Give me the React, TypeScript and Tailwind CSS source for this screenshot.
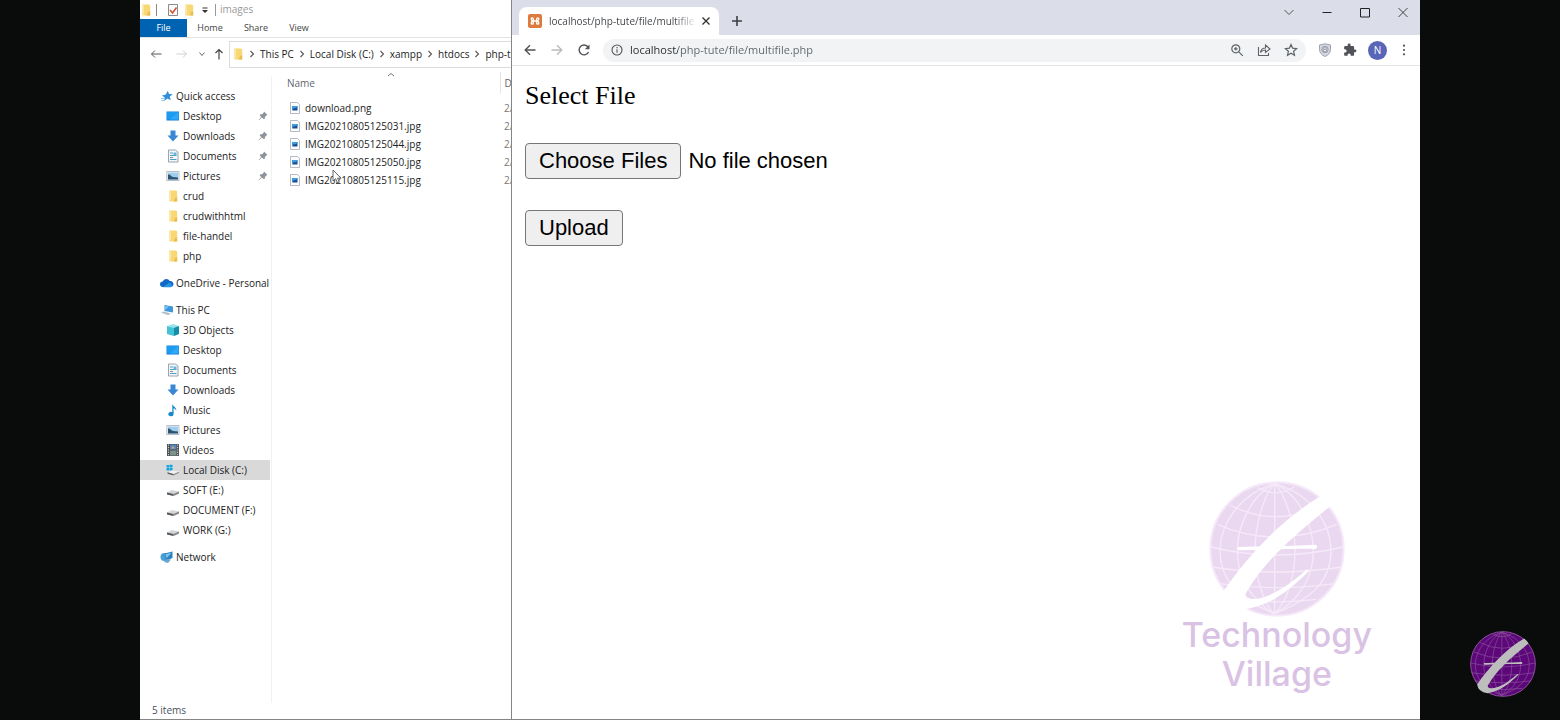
import React from "react";

type IconProps = { className?: string };

const Folder = ({ className = "" }: IconProps) => (
  <svg className={`h-3 w-3 shrink-0 ${className}`} viewBox="0 0 12 12" aria-hidden="true">
    <path d="M2 .5h7l1.200 1V11.500H3L2 10.500z" fill="#f8d775" />
    <path d="M2 .5h2v10.500L2 10z" fill="#fbe7a6" />
    <path d="M8.500 7.500h1.700v4H6.500z" fill="#e9bd51" />
  </svg>
);

const Star = () => (
  <svg className="h-3 w-3" viewBox="0 0 12 12" aria-hidden="true">
    <path d="M6.800.8 8 4l3.700.2-2.900 2.300.9 3.800-3.300-1.900L3.200 11l.5-3.500L1 5.500l3.800-.9z" fill="#2f8fdc" />
    <path d="M0 8.500h3M.5 10.500h2.500" stroke="#6db6ec" strokeWidth=".8" />
  </svg>
);

const Desktop = () => (
  <svg className="h-3 w-3.5" viewBox="0 0 14 12" aria-hidden="true">
    <path d="M.5 1.500h12.500v9H.5z" fill="#0d7fdb" />
    <path d="M1 2h11.500v7.500H1z" fill="#1d9bf0" />
    <path d="M12.500 2v7.500H4z" fill="#2fa8f8" />
  </svg>
);

const Download = () => (
  <svg className="h-3 w-3.5" viewBox="0 0 14 12" aria-hidden="true">
    <path d="M4.500.5h5v5h3L7 11.500 1.500 5.500h3z" fill="#3a87d4" />
  </svg>
);

const Doc = () => (
  <svg className="h-3.5 w-3.5" viewBox="0 0 14 14" aria-hidden="true">
    <path d="M2.500 1h7l2.500 2v10h-9.500z" fill="#f4f7f9" stroke="#8d9aa3" strokeWidth=".9" />
    <path d="M4 4h3M4 6.500h6.500M4 10.500h6.500" stroke="#4d9dc4" strokeWidth="1" />
    <path d="M4 8.500h3" stroke="#86939b" strokeWidth="1" />
    <path d="M7.500 3.500h3v3h-3z" fill="#68b4d6" />
  </svg>
);

const Picture = () => (
  <svg className="h-3 w-3.5" viewBox="0 0 14 12" aria-hidden="true">
    <path d="M.8 1.500h12.200v9H.8z" fill="#f5f7f9" stroke="#a6afb8" strokeWidth=".8" />
    <path d="M2 2.500h10v7H2z" fill="#9fcdec" />
    <path d="M2 4.500c2-.5 3 2 5 2.500l5 .5v2H2z" fill="#2d5372" />
  </svg>
);

const Cloud = () => (
  <svg className="h-3 w-3.5" viewBox="0 0 14 12" aria-hidden="true">
    <path d="M3 10a2.800 2.800 0 0 1-.3-5.600A4 4 0 0 1 9.800 4 3 3 0 0 1 11 10z" fill="#1168c4" />
    <path d="M3 10.200 9.500 5.500a2.800 2.800 0 0 1 1.500 4.700z" fill="#2397e6" />
  </svg>
);

const Computer = () => (
  <svg className="h-3 w-3.5" viewBox="0 0 14 12" aria-hidden="true">
    <path d="M4.500 1 13 2.500v6L4.500 7z" fill="#3c97dc" />
    <path d="M5.200 2 9 2.600 5.200 6z" fill="#7cc3ef" />
    <path d="M1 8.500 4 7.500l7 2-3 1.700z" fill="#b5c1ca" />
  </svg>
);

const Cube = () => (
  <svg className="h-3.5 w-3.5" viewBox="0 0 14 14" aria-hidden="true">
    <path d="m1 3 6-2 6 2-4.500 1.800z" fill="#99e2ec" />
    <path d="m1 3 7 1.800V13L1 11z" fill="#45c3d6" />
    <path d="M13 3 8 4.800V13l5-2z" fill="#128fa8" />
  </svg>
);

const Note = () => (
  <svg className="h-3.5 w-3.5" viewBox="0 0 14 14" aria-hidden="true">
    <path d="M6.300.8c.5 3 4.500 3.200 3.900 7.200-.5-2-1.600-2.500-2.600-2.700V11a2.600 2.200 0 1 1-1.300-1.900z" fill="#1788d0" />
  </svg>
);

const Film = () => (
  <svg className="h-3.5 w-3.5" viewBox="0 0 14 14" aria-hidden="true">
    <path d="M1 1h12v12H1z" fill="#4b4e55" />
    <path d="M4 1.500h6.500v5H4z" fill="#5b83bd" />
    <path d="M4 7.500h6.500v5H4z" fill="#7e9488" />
    <path d="M5 5.500 7 3l2 2.500z" fill="#c9ae61" />
    <path d="M2.400 1.500v11M11.700 1.500v11" stroke="#dfe2e6" strokeWidth="1" strokeDasharray="1.200 1.200" />
  </svg>
);

const Drive = () => (
  <svg className="h-3 w-3.5" viewBox="0 0 14 12" aria-hidden="true">
    <path d="m1 8.500 5-2.500 7 1.500v2L7.500 12 1 10.500z" fill="#d4d6d8" />
    <path d="M1 8.500 7.500 10v2L1 10.500z" fill="#56595c" />
    <path d="M7.500 10 13 7.500v2L7.500 12z" fill="#85888b" />
  </svg>
);

const SystemDrive = () => (
  <svg className="h-3 w-3.5" viewBox="0 0 14 12" aria-hidden="true">
    <path d="M.5 1h2.700v2.500H.5zM3.600.8h2.900v2.700H3.600zM.5 3.900h2.700v2.500H.5zM3.600 3.900h2.900v2.700H3.600z" fill="#12a5dd" />
    <path d="m2 8.500 4-2 7 1v1.500L7.500 11.500 2 10z" fill="#eef0f1" />
    <path d="M1.500 8.300 7.500 10v1.500l-6-1.700z" fill="#54585b" />
    <path d="M7.500 10 13 7.800V9l-5.500 2.500z" fill="#8b8e91" />
  </svg>
);

const NetworkIcon = () => (
  <svg className="h-3.5 w-3.5" viewBox="0 0 14 14" aria-hidden="true">
    <circle cx="4.500" cy="7" r="4" fill="#4aa0d4" />
    <path d="M4.500 3.500 12.500 1.500v6.500L6 10.500z" fill="#2c82c0" />
    <path d="m5.500 4.300 6-1.500-5 5.500z" fill="#7cc6ec" />
    <path d="m4 12 3-3 4 .5-3 3.500z" fill="#6aa7cf" />
  </svg>
);

const Pin = () => (
  <svg className="h-2.5 w-2.5" viewBox="0 0 10 10" aria-hidden="true">
    <path d="M6 .5 9.500 4l-1.200.5-1.500 1.700.1 1.500-1 .6-2-1.900L1 9.300.6 9l2.600-3-1.500-1.800.7-1 1.700.1L5.600 1.800z" fill="#8d9399" />
  </svg>
);

const ImageFile = () => (
  <svg className="h-3 w-2.5 shrink-0" viewBox="0 0 10 12" aria-hidden="true">
    <path d="M.5.500h7l2 2v9h-9z" fill="#fbfcfd" stroke="#a3abb3" strokeWidth=".8" />
    <path d="M2.300 4h5.200v4.500H2.300z" fill="#174f96" />
    <path d="M2.300 4h5.200v1.300L5.500 6 2.300 6.800z" fill="#3d9fe0" />
  </svg>
);

type Tone = { fill: string; line: string; mark: string };

const Globe = ({ tone, className }: { tone: Tone; className: string }) => (
  <svg className={className} viewBox="0 0 408 408" aria-hidden="true">
    <circle cx="204" cy="204" r="200" fill={tone.fill} stroke={tone.line} strokeWidth="6" />
    <g fill="none" stroke={tone.line} strokeWidth="4">
      <path d="M197 8C90 40 33 130 33 210S80 350 196 398" />
      <path d="M197 8C130 40 85 130 85 210S130 360 196 398" />
      <path d="M197 8C165 40 138 130 138 210S165 370 196 398" />
      <path d="M197 8V398" />
      <path d="M197 8C230 40 258 130 258 210S230 370 196 398" />
      <path d="M197 8C270 40 313 130 313 210S270 360 196 398" />
      <path d="M197 8C310 40 366 130 366 210S320 350 196 398" />
      <path d="M146 20Q200 52 256 18M63 72Q200 142 340 72M25 130Q200 206 384 130M6 198Q200 246 402 198M8 258Q200 288 400 258M30 308Q200 332 378 308M85 355Q200 370 322 355" />
    </g>
    <g fill={tone.mark}>
      <path d="M334 46C215 118 120 220 44 330Q50 376 108 385C185 372 240 330 299 271Q300 263 291 267C235 318 180 350 138 354C112 354 106 345 112 334C165 245 240 175 362 77Q352 58 334 46Z" />
      <path d="M88 198C150 195 240 196 320 191Q329 197 320 204C240 202 150 208 88 208Q82 203 88 198Z" />
    </g>
  </svg>
);

type Item = { label: string; icon: React.ReactNode; pinned?: boolean; active?: boolean };

const quick: Item[] = [
  { label: "Desktop", icon: <Desktop />, pinned: true },
  { label: "Downloads", icon: <Download />, pinned: true },
  { label: "Documents", icon: <Doc />, pinned: true },
  { label: "Pictures", icon: <Picture />, pinned: true },
  { label: "crud", icon: <Folder /> },
  { label: "crudwithhtml", icon: <Folder /> },
  { label: "file-handel", icon: <Folder /> },
  { label: "php", icon: <Folder /> },
];

const pc: Item[] = [
  { label: "3D Objects", icon: <Cube /> },
  { label: "Desktop", icon: <Desktop /> },
  { label: "Documents", icon: <Doc /> },
  { label: "Downloads", icon: <Download /> },
  { label: "Music", icon: <Note /> },
  { label: "Pictures", icon: <Picture /> },
  { label: "Videos", icon: <Film /> },
  { label: "Local Disk (C:)", icon: <SystemDrive />, active: true },
  { label: "SOFT (E:)", icon: <Drive /> },
  { label: "DOCUMENT (F:)", icon: <Drive /> },
  { label: "WORK (G:)", icon: <Drive /> },
];

const Group = ({ label, icon, items = [] }: { label: string; icon: React.ReactNode; items?: Item[] }) => (
  <section>
    <a href="#" className="flex h-5 items-center gap-0.5 pl-5 whitespace-nowrap">
      <span className="flex w-3.5 justify-center">{icon}</span>
      <span>{label}</span>
    </a>
    <ul>
      {items.map((item) => (
        <li key={item.label}>
          <a href="#" className={`flex h-5 items-center gap-[3px] pr-0.5 pl-[26px] ${item.active ? "bg-[#d9d9d9]" : ""}`}>
            <span className="flex w-3.5 justify-center">{item.icon}</span>
            <span className="flex-1">{item.label}</span>
            {item.pinned && <Pin />}
          </a>
        </li>
      ))}
    </ul>
  </section>
);

const files = ["download.png", "IMG20210805125031.jpg", "IMG20210805125044.jpg", "IMG20210805125050.jpg", "IMG20210805125115.jpg"];

const Chevron = () => (
  <svg className="h-2 w-1.5 shrink-0" viewBox="0 0 6 8" fill="none" stroke="#555" strokeWidth="1.100" aria-hidden="true">
    <path d="m1.500 1 3 3-3 3" />
  </svg>
);

const Explorer = () => (
  <section className="relative flex w-[372px] shrink-0 flex-col overflow-hidden border-r border-[#858585] bg-white font-['Open_Sans','Noto_Sans',sans-serif] text-[10px] text-[#222]">
    <header className="flex h-[19px] shrink-0 items-center text-[#999]">
      <Folder />
      <span className="ml-1 h-3 w-px bg-[#888]" />
      <svg className="ml-2.5 h-3.5 w-3" viewBox="0 0 12 14" fill="none" aria-hidden="true">
        <path d="M1.500 1.500h9v11h-9z" stroke="#8b8b8b" fill="#fafafa" />
        <path d="m3 7 2.500 3L9.500 4.500" stroke="#d35838" strokeWidth="1.600" />
      </svg>
      <Folder className="ml-1" />
      <svg className="ml-1.5 h-2 w-2" viewBox="0 0 8 8" fill="#333" aria-hidden="true">
        <path d="M1.500 1.500h5v1h-5zM1 4h6L4 7z" />
      </svg>
      <span className="ml-1.5 h-3 w-px bg-[#999]" />
      <h1 className="ml-1 text-[10px]">images</h1>
    </header>
    <nav className="flex h-[19px] shrink-0 items-center border-b border-[#e3e3e3] text-[9px] text-[#444]">
      <button className="h-full w-[47px] bg-[#0063b1] text-white">File</button>
      <button className="w-[46px]">Home</button>
      <button className="w-[46px]">Share</button>
      <button className="w-10">View</button>
    </nav>
    <div className="flex h-8 shrink-0 items-center">
      <div className="flex w-[89px] shrink-0 items-center gap-2 pl-2.5">
        <button aria-label="Back">
          <svg className="h-3 w-3" viewBox="0 0 12 12" fill="none" stroke="#555"><path d="M11.500 6H1.500m3.500-3.500L1.500 6 5 9.500" /></svg>
        </button>
        <button aria-label="Forward" className="ml-1.5">
          <svg className="h-3 w-3" viewBox="0 0 12 12" fill="none" stroke="#d0d0d0"><path d="M.5 6h10M7 2.500 10.500 6 7 9.500" /></svg>
        </button>
        <button aria-label="Recent locations" className="ml-0.5">
          <svg className="h-1.5 w-2" viewBox="0 0 8 6" fill="none" stroke="#666"><path d="m1.500 1.500 2.500 3 2.500-3" /></svg>
        </button>
        <button aria-label="Up">
          <svg className="h-3 w-2.5" viewBox="0 0 10 12" fill="none" stroke="#444" strokeWidth="1.200"><path d="M5 11.500v-10M1.500 5 5 1.500 8.500 5" /></svg>
        </button>
      </div>
      <div className="flex h-[27px] min-w-0 flex-1 items-center gap-[5px] overflow-hidden border border-r-0 border-[#dcdcdc] pl-0.5 whitespace-nowrap">
        <Folder />
        {["This PC", "Local Disk (C:)", "xampp", "htdocs", "php-tute"].map((part) => (
          <React.Fragment key={part}>
            <Chevron />
            <a href="#">{part}</a>
          </React.Fragment>
        ))}
      </div>
    </div>
    <div className="flex min-h-0 flex-1 pt-0.5">
      <aside className="mt-1 mb-4 flex w-[132px] shrink-0 flex-col gap-[7px] border-r border-[#f1f1f1] pt-2.5 pr-px">
        <Group label="Quick access" icon={<Star />} items={quick} />
        <Group label="OneDrive - Personal" icon={<Cloud />} />
        <Group label="This PC" icon={<Computer />} items={pc} />
        <Group label="Network" icon={<NetworkIcon />} />
      </aside>
      <div className="relative flex-1 overflow-hidden">
        <svg className="absolute top-0 left-[115px] h-1.5 w-2" viewBox="0 0 8 6" fill="none" stroke="#777" aria-hidden="true">
          <path d="M1 4 4 1.500 7 4" />
        </svg>
        <table className="w-[260px] table-fixed border-collapse text-left">
          <thead>
            <tr className="h-[22px] text-[#5f6670]">
              <th className="w-[228px] border-r border-[#e5e5e5] p-0 pl-[15px] font-normal">Name</th>
              <th className="p-0 pl-1 font-normal">Date</th>
            </tr>
          </thead>
          <tbody>
            <tr className="h-[5px]" />
            {files.map((name) => (
              <tr key={name} className="h-[18px]">
                <td className="p-0 pl-[18px]">
                  <span className="flex items-center gap-[5px]"><ImageFile />{name}</span>
                </td>
                <td className="p-0 pl-1 whitespace-nowrap text-[#777]">2/4/22</td>
              </tr>
            ))}
          </tbody>
        </table>
        <svg className="absolute top-[97px] left-[60px] h-4 w-3" viewBox="0 0 12 16" aria-hidden="true">
          <path d="M1 1v11l2.600-2.300L5.500 14l1.800-.8-1.800-4H9z" fill="#fff" stroke="#555" strokeWidth=".9" />
        </svg>
      </div>
    </div>
    <footer className="absolute bottom-0 left-0 flex h-[18px] items-center pl-3 text-[#4a5060]">5 items</footer>
  </section>
);

const Browser = () => (
  <section className="flex min-w-0 flex-1 flex-col bg-white font-['Open_Sans','Noto_Sans',sans-serif] text-[#5f6368]">
    <header className="flex h-[35px] shrink-0 items-start bg-[#dbdee8] pl-[7px]">
      <div className="mt-[7px] flex h-7 w-[200px] items-center rounded-t-lg bg-white pr-2 pl-[9px] text-[10px] text-[#45484c]">
        <svg className="h-3.5 w-3.5 shrink-0" viewBox="0 0 14 14" aria-hidden="true">
          <rect width="14" height="14" rx="2" fill="#dd7a3e" />
          <path d="M5 7h4M5 7C2.800 6.500 2.800 3.800 4.300 3.800S5.400 5.500 5 7C2.800 7.500 2.800 10.200 4.300 10.200S5.400 8.500 5 7M9 7C11.200 6.500 11.200 3.800 9.700 3.800S8.600 5.500 9 7c2.200.5 2.200 3.200.7 3.200S8.600 8.500 9 7" fill="none" stroke="#fff" strokeWidth="1.300" />
        </svg>
        <span className="ml-[7px] min-w-0 flex-1 overflow-hidden whitespace-nowrap [mask-image:linear-gradient(to_right,black_85%,transparent)]">localhost/php-tute/file/multifile.php</span>
        <button aria-label="Close tab" className="ml-1">
          <svg className="h-2.5 w-2.5" viewBox="0 0 10 10" stroke="#333" strokeWidth="1.400"><path d="m1.500 1.500 7 7m0-7-7 7" /></svg>
        </button>
      </div>
      <button aria-label="New tab" className="mt-[15px] ml-3">
        <svg className="h-3 w-3" viewBox="0 0 12 12" stroke="#3c4043" strokeWidth="1.600"><path d="M6 1v10M1 6h10" /></svg>
      </button>
      <div className="mt-1.5 mr-[11px] ml-auto flex items-center gap-[26px]">
        <button aria-label="Search tabs"><svg className="h-3 w-3" viewBox="0 0 12 12" fill="none" stroke="#555"><path d="M1.500 4 6 8.500 10.500 4" /></svg></button>
        <button aria-label="Minimize"><svg className="h-3 w-3" viewBox="0 0 12 12" stroke="#222"><path d="M1.500 6.500h9" /></svg></button>
        <button aria-label="Maximize"><svg className="h-3 w-3" viewBox="0 0 12 12" fill="none" stroke="#222"><path d="M1.500 2.500h9V11h-9z" /></svg></button>
        <button aria-label="Close"><svg className="h-3 w-3" viewBox="0 0 12 12" stroke="#444"><path d="m1.500 2 9 9m0-9-9 9" /></svg></button>
      </div>
    </header>
    <div className="flex h-[31px] shrink-0 items-center border-b border-[#e4e5e8] pr-2.5 pl-3">
      <button aria-label="Back"><svg className="h-3 w-3" viewBox="0 0 12 12" fill="none" stroke="#505357" strokeWidth="1.400"><path d="M11.500 6H1.500M6 1.200 1.200 6 6 10.800" /></svg></button>
      <button aria-label="Forward" className="ml-[15px]"><svg className="h-3 w-3" viewBox="0 0 12 12" fill="none" stroke="#b8babd" strokeWidth="1.300"><path d="M.5 6h10M6 1.200 10.800 6 6 10.800" /></svg></button>
      <button aria-label="Reload" className="ml-[15px]"><svg className="h-3 w-3" viewBox="0 0 12 12" fill="none" stroke="#505357" strokeWidth="1.400"><path d="M10.500 8A4.900 4.900 0 1 1 10 3" /><path d="M11.500.5v4.700H6.800z" fill="#505357" stroke="none" /></svg></button>
      <div className="ml-[13px] flex h-[23px] min-w-0 flex-1 items-center rounded-full bg-[#f1f3f4] pr-2 pl-2">
        <svg className="h-3 w-3 shrink-0" viewBox="0 0 12 12" fill="none" stroke="#505357" strokeWidth="1.100" aria-hidden="true"><circle cx="6" cy="6" r="5" /><path d="M6 5.300v3.500M6 3v1.200" /></svg>
        <input aria-label="Address" defaultValue="localhost/php-tute/file/multifile.php" className="ml-[7px] min-w-0 flex-1 bg-[linear-gradient(to_right,#26282b_48px,#5f6368_48px)] bg-clip-text text-[11px] text-transparent caret-black outline-none" />
        <button aria-label="Zoom"><svg className="h-3.5 w-3.5" viewBox="0 0 14 14" fill="none" stroke="#5f6368" strokeWidth="1.200"><circle cx="5.800" cy="5.800" r="4" /><path d="m8.800 8.800 4 4M4 5.800h3.600M5.800 4v3.600" /></svg></button>
        <button aria-label="Share" className="ml-[13px]"><svg className="h-3.5 w-3.5" viewBox="0 0 14 14" fill="none" stroke="#5f6368" strokeWidth="1.100"><path d="M1.500 4v8.500h10V10" /><path d="M3.500 9.500C4 6.500 6 5 8.500 5V2L13 6 8.500 9.500v-2.500C6.500 7 5 7.500 3.500 9.500z" /></svg></button>
        <button aria-label="Bookmark" className="ml-[13px]"><svg className="h-3.5 w-3.5" viewBox="0 0 14 14" fill="none" stroke="#5f6368" strokeWidth="1.200"><path d="m7 1.500 1.600 3.700 4 .4-3 2.700.9 4L7 10.200l-3.500 2.100.9-4-3-2.700 4-.4z" /></svg></button>
      </div>
      <div className="ml-3 flex items-center gap-[11px]">
        <button aria-label="Shield"><svg className="h-3.5 w-3.5" viewBox="0 0 14 14"><path d="M7 .8 12.500 2v4.500c0 3-2 5.500-5.500 7-3.500-1.500-5.500-4-5.500-7V2z" fill="#d4d7df" stroke="#9da2ac" /><circle cx="7" cy="6.500" r="3.200" fill="#c3c8d1" stroke="#9ca1ac" /><path d="M5.500 6.500h3v2h-3zM6 6V5a1 1 0 0 1 2 0v1" fill="#f5f6f8" stroke="#898f9b" strokeWidth=".7" /></svg></button>
        <button aria-label="Extensions"><svg className="h-3.5 w-3.5" viewBox="0 0 24 24" fill="#505357"><path d="M20.500 11H19V7a2 2 0 0 0-2-2h-4V3.500a2.500 2.500 0 0 0-5 0V5H4a2 2 0 0 0-2 2v3.800h1.500a2.700 2.700 0 0 1 0 5.400H2V20a2 2 0 0 0 2 2h3.800v-1.500a2.700 2.700 0 0 1 5.400 0V22H17a2 2 0 0 0 2-2v-4h1.500a2.500 2.500 0 0 0 0-5z" /></svg></button>
        <button className="h-[19px] w-[19px] rounded-full bg-[#5965b8] text-center text-[10px] text-white">N</button>
        <button aria-label="Menu"><svg className="h-3 w-3" viewBox="0 0 12 12" fill="#505357"><circle cx="6" cy="1.700" r="1.100" /><circle cx="6" cy="6" r="1.100" /><circle cx="6" cy="10.300" r="1.100" /></svg></button>
      </div>
    </div>
    <main className="relative flex-1 px-[13px] pt-3.5 text-black">
      <form onSubmit={(e) => e.preventDefault()} className="flex flex-col items-start gap-[31px] font-['Liberation_Sans',Arial,sans-serif] text-[22px] leading-8">
        <label htmlFor="files" className="font-['Liberation_Serif','Times_New_Roman',serif] text-[26px]">Select File</label>
        <input
          id="files"
          type="file"
          multiple
          className="w-full max-w-lg file:mr-[7px] file:h-9 file:rounded file:border file:border-solid file:border-[#767676] file:bg-[#efefef] file:px-[13px] file:text-black"
        />
        <button className="h-9 rounded border border-[#767676] bg-[#efefef] px-[13px]">Upload</button>
      </form>
      <div className="absolute right-12 bottom-[26px] flex flex-col items-center font-[Inter,sans-serif] text-[34px] leading-[39px] font-medium text-[#d9c2e4]">
        <Globe className="-mb-0.5 h-[136px] w-[136px]" tone={{ fill: "#ead8f0", line: "#f6e9f9", mark: "#ffffff" }} />
        <p className="text-center">Technology<br />Village</p>
      </div>
    </main>
  </section>
);

export default function App() {
  return (
    <div className="relative flex min-h-screen bg-[#090c0b] px-[140px]">
      <div className="flex min-w-0 flex-1 border-b border-[#858585]">
        <Explorer />
        <Browser />
      </div>
      <Globe className="absolute right-6 bottom-[23px] h-[66px] w-[66px]" tone={{ fill: "#5c0878", line: "#8d53a0", mark: "#bdbdbd" }} />
    </div>
  );
}
